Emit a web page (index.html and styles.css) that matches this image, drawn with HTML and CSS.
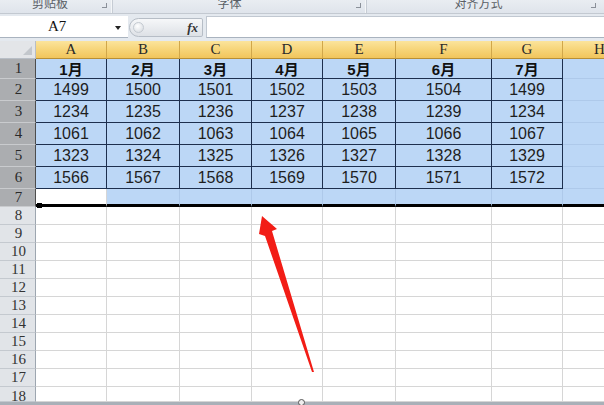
FILE: index.html
```html
<!DOCTYPE html>
<html lang="zh">
<head>
<meta charset="utf-8">
<title>Excel</title>
<link rel="stylesheet" href="styles.css">
</head>
<body>
<div class="app">
  <div class="ribbon">
    <div class="grp g1"><span class="glabel">剪贴板</span><span class="launch"></span></div>
    <div class="grp g2"><span class="glabel">字体</span><span class="launch"></span></div>
    <div class="grp g3"><span class="glabel">对齐方式</span><span class="launch"></span></div>
  </div>
  <div class="fbar">
    <div class="namebox"><span class="nametext">A7</span><span class="ddarrow"></span></div>
    <div class="pill"><span class="knob"></span><span class="fx">fx</span></div>
    <div class="finput"></div>
  </div>
  <div class="sheet">
    <div class="corner"><span class="tri"></span></div>
    <div class="ch">A</div><div class="ch">B</div><div class="ch">C</div><div class="ch">D</div><div class="ch">E</div><div class="ch">F</div><div class="ch">G</div><div class="ch">H</div>

    <div class="rh sel">1</div>
    <div class="c t hd">1月</div><div class="c t hd">2月</div><div class="c t hd">3月</div><div class="c t hd">4月</div><div class="c t hd">5月</div><div class="c t hd">6月</div><div class="c t hd">7月</div><div class="c b"></div>

    <div class="rh sel">2</div>
    <div class="c t">1499</div><div class="c t">1500</div><div class="c t">1501</div><div class="c t">1502</div><div class="c t">1503</div><div class="c t">1504</div><div class="c t">1499</div><div class="c b"></div>

    <div class="rh sel">3</div>
    <div class="c t">1234</div><div class="c t">1235</div><div class="c t">1236</div><div class="c t">1237</div><div class="c t">1238</div><div class="c t">1239</div><div class="c t">1234</div><div class="c b"></div>

    <div class="rh sel">4</div>
    <div class="c t">1061</div><div class="c t">1062</div><div class="c t">1063</div><div class="c t">1064</div><div class="c t">1065</div><div class="c t">1066</div><div class="c t">1067</div><div class="c b"></div>

    <div class="rh sel">5</div>
    <div class="c t">1323</div><div class="c t">1324</div><div class="c t">1325</div><div class="c t">1326</div><div class="c t">1327</div><div class="c t">1328</div><div class="c t">1329</div><div class="c b"></div>

    <div class="rh sel">6</div>
    <div class="c t">1566</div><div class="c t">1567</div><div class="c t">1568</div><div class="c t">1569</div><div class="c t">1570</div><div class="c t">1571</div><div class="c t">1572</div><div class="c b"></div>

    <div class="rh sel">7</div>
    <div class="c act thick"><span class="handle"></span></div><div class="c b thick"></div><div class="c b thick"></div><div class="c b thick"></div><div class="c b thick"></div><div class="c b thick"></div><div class="c b thick"></div><div class="c b thick"></div>

    <div class="rh">8</div><div class="c"></div><div class="c"></div><div class="c"></div><div class="c"></div><div class="c"></div><div class="c"></div><div class="c"></div><div class="c"></div>
    <div class="rh">9</div><div class="c"></div><div class="c"></div><div class="c"></div><div class="c"></div><div class="c"></div><div class="c"></div><div class="c"></div><div class="c"></div>
    <div class="rh">10</div><div class="c"></div><div class="c"></div><div class="c"></div><div class="c"></div><div class="c"></div><div class="c"></div><div class="c"></div><div class="c"></div>
    <div class="rh">11</div><div class="c"></div><div class="c"></div><div class="c"></div><div class="c"></div><div class="c"></div><div class="c"></div><div class="c"></div><div class="c"></div>
    <div class="rh">12</div><div class="c"></div><div class="c"></div><div class="c"></div><div class="c"></div><div class="c"></div><div class="c"></div><div class="c"></div><div class="c"></div>
    <div class="rh">13</div><div class="c"></div><div class="c"></div><div class="c"></div><div class="c"></div><div class="c"></div><div class="c"></div><div class="c"></div><div class="c"></div>
    <div class="rh">14</div><div class="c"></div><div class="c"></div><div class="c"></div><div class="c"></div><div class="c"></div><div class="c"></div><div class="c"></div><div class="c"></div>
    <div class="rh">15</div><div class="c"></div><div class="c"></div><div class="c"></div><div class="c"></div><div class="c"></div><div class="c"></div><div class="c"></div><div class="c"></div>
    <div class="rh">16</div><div class="c"></div><div class="c"></div><div class="c"></div><div class="c"></div><div class="c"></div><div class="c"></div><div class="c"></div><div class="c"></div>
    <div class="rh">17</div><div class="c"></div><div class="c"></div><div class="c"></div><div class="c"></div><div class="c"></div><div class="c"></div><div class="c"></div><div class="c"></div>
    <div class="rh last">18</div><div class="c"></div><div class="c"></div><div class="c"></div><div class="c"></div><div class="c"></div><div class="c"></div><div class="c"></div><div class="c"></div>
  </div>
  <div class="bottombar"><span class="split"></span></div>

  <svg class="arrow" width="604" height="405" viewBox="0 0 604 405" xmlns="http://www.w3.org/2000/svg">
    <polygon points="262,216 277,229 272,231 314,372 312,372 265,236 259,234" fill="#f21d16"/>
  </svg>
</div>
</body>
</html>
```

FILE: styles.css
```css
* { box-sizing: border-box; }
html, body { margin: 0; padding: 0; }
body {
  width: 604px;
  height: 405px;
  overflow: hidden;
  background: #ffffff;
  font-family: "Liberation Sans", "Noto Sans CJK SC", sans-serif;
}
.app {
  position: relative;
  width: 604px;
  height: 405px;
  overflow: hidden;
  display: flex;
  flex-direction: column;
}

/* ribbon strip */
.ribbon {
  height: 14px;
  flex: none;
  display: flex;
  background: linear-gradient(#e9edf2, #dfe4eb);
  border-bottom: 1px solid #c3c9d1;
  overflow: hidden;
}
.grp {
  display: flex;
  justify-content: center;
  position: relative;
  border-right: 1px solid #c6ccd4;
  box-shadow: inset -1px 0 0 #f4f6f8;
}
.g1 { width: 113px; padding-right: 12px; }
.g2 { width: 254px; padding-right: 20px; }
.g3 { flex: 1; border-right: none; box-shadow: none; padding-right: 14px; }
.glabel {
  font-family: "Noto Sans CJK SC", sans-serif;
  font-size: 12px;
  line-height: 12px;
  margin-top: -3px;
  color: #5a5f66;
}
.launch {
  position: absolute;
  right: 5px;
  top: 3px;
  width: 5px;
  height: 5px;
  border-right: 1px solid #8a9099;
  border-bottom: 1px solid #8a9099;
}
.g3 .launch { right: 8px; }

/* formula bar */
.fbar {
  height: 27px;
  flex: none;
  display: flex;
  align-items: flex-start;
  padding-top: 2px;
  background: #e4e9ef;
}
.namebox {
  width: 128px;
  height: 22px;
  background: #ffffff;
  border-bottom: 1px solid #a9b3bf;
  display: flex;
  align-items: center;
  position: relative;
}
.nametext {
  font-family: "Liberation Serif", serif;
  font-size: 15px;
  color: #111;
  margin-left: 48px;
}
.ddarrow {
  position: absolute;
  left: 115px;
  top: 10px;
  width: 0;
  height: 0;
  border-left: 3px solid transparent;
  border-right: 3px solid transparent;
  border-top: 4px solid #222;
}
.pill {
  margin-left: 1px;
  margin-top: 2px;
  width: 74px;
  height: 19px;
  border: 1px solid #b6bdc6;
  border-radius: 10px 2px 2px 10px;
  background: linear-gradient(#f6f7f9, #dde1e6);
  display: flex;
  align-items: center;
  justify-content: space-between;
  padding: 0 4px 0 3px;
}
.knob {
  width: 11px;
  height: 11px;
  border-radius: 50%;
  background: radial-gradient(circle at 40% 35%, #ffffff, #d3d8de);
  border: 1px solid #c4cad1;
}
.fx {
  font-family: "Liberation Serif", serif;
  font-style: italic;
  font-weight: bold;
  font-size: 13px;
  color: #333;
}
.finput {
  flex: 1;
  margin-left: 3px;
  height: 22px;
  background: #ffffff;
  border-top: 1px solid #c1c8d1;
  border-bottom: 1px solid #a9b3bf;
  border-left: 1px solid #c1c8d1;
}

/* sheet grid */
.sheet {
  flex: none;
  display: grid;
  grid-template-columns: 36px 71px 73px 72px 71px 73px 96px 71px 74px;
  grid-template-rows: 18px 20px repeat(5, 22px) 18px repeat(10, 18px) 15px;
  width: 637px;
}
.corner {
  background: #e3e5e8;
  border-right: 1px solid #b8bec6;
  border-bottom: 1px solid #b8bec6;
  position: relative;
}
.tri {
  position: absolute;
  right: 3px;
  bottom: 3px;
  width: 0;
  height: 0;
  border-left: 9px solid transparent;
  border-bottom: 9px solid #c3c7cc;
}
.ch {
  background: linear-gradient(#fbe49c, #f6d376 55%, #f1c55c);
  border-right: 1px solid #d1a74a;
  border-bottom: 1px solid #b88f35;
  font-family: "Liberation Serif", serif;
  font-size: 15px;
  color: #2a2a2a;
  display: flex;
  align-items: center;
  justify-content: center;
}
.rh {
  background: #e1e4e8;
  border-right: 1px solid #9da6b0;
  border-bottom: 1px solid #c4c9cf;
  font-family: "Liberation Serif", serif;
  font-size: 15px;
  color: #333;
  display: flex;
  align-items: center;
  justify-content: center;
  padding-left: 2px;
}
.rh.sel {
  background: #abadb0;
  border-bottom: 1px solid #c9cbce;
  border-right: 1px solid #4d4d4d;
  color: #2a2a2a;
}
.rh.last { align-items: flex-start; padding-top: 1px; }
.c {
  border-right: 1px solid #d6d6d6;
  border-bottom: 1px solid #d6d6d6;
  background: #ffffff;
}
.c.b {
  background: #bcd7f6;
  border-right: 1px solid #aec9ea;
  border-bottom: 1px solid #aec9ea;
}
.c.t {
  background: #bcd7f6;
  border-right: 1px solid #1d2f4e;
  border-bottom: 1px solid #1d2f4e;
  display: flex;
  align-items: center;
  justify-content: center;
  font-size: 16px;
  color: #1e1e1e;
}
.c.hd {
  font-weight: bold;
  font-size: 15px;
  color: #111;
}
.c.act {
  background: #ffffff;
  position: relative;
  border-right: 1px solid #d6d6d6;
}
.c.thick { border-bottom: 3px solid #000; }
.handle {
  position: absolute;
  left: 1px;
  bottom: -4px;
  width: 5px;
  height: 5px;
  background: #000;
}

.bottombar {
  flex: none;
  height: 3px;
  background: #a9b0b8;
  position: relative;
}
.split {
  position: absolute;
  left: 298px;
  top: -3px;
  width: 7px;
  height: 7px;
  border-radius: 50%;
  border: 1px solid #555;
  background: #eee;
}

.arrow {
  position: absolute;
  left: 0;
  top: 0;
  pointer-events: none;
}
```
